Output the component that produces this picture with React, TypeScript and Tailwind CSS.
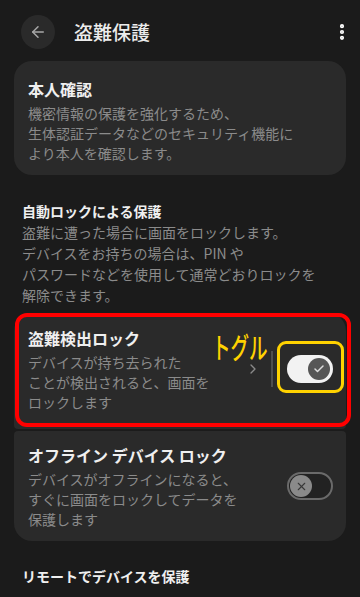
import React from 'react';
import { ArrowLeft, EllipsisVertical, ChevronRight, Check, X } from 'lucide-react';

const Title: React.FC<{ children: React.ReactNode }> = ({ children }) => (
  <div className="text-[16px] font-bold leading-[24px] text-[#efefef]">{children}</div>
);

const Desc: React.FC<{ children: React.ReactNode }> = ({ children }) => (
  <div className="mt-[2px] text-[14px] leading-[20px] text-[#8b8b8b]">{children}</div>
);

const ToggleOn = () => (
  <div className="flex h-[28px] w-[46px] shrink-0 items-center justify-end rounded-full bg-[#f2f2f2] pr-[3px]">
    <div className="flex h-[22px] w-[22px] items-center justify-center rounded-full bg-[#565656]">
      <Check size={12} strokeWidth={3} className="text-[#dcdcdc]" />
    </div>
  </div>
);

const ToggleOff = () => (
  <div className="flex h-[28px] w-[46px] shrink-0 items-center rounded-full border-2 border-[#6a6a6a] bg-[#222222] pl-[1px]">
    <div className="flex h-[22px] w-[22px] items-center justify-center rounded-full bg-[#8a8a8a]">
      <X size={13} strokeWidth={2} className="text-[#383838]" />
    </div>
  </div>
);

export default function App() {
  return (
    <div className="h-[597px] w-[360px] overflow-hidden bg-[#1b1b1b] font-['Noto_Sans_CJK_JP','Noto_Sans',sans-serif] text-white">
      {/* header */}
      <div className="flex h-[61px] items-start pt-[15px]">
        <div className="ml-[21px] flex h-[34px] w-[34px] items-center justify-center rounded-full bg-[#2a2a2a]">
          <ArrowLeft size={18} strokeWidth={2} className="text-[#a8a8a8]" />
        </div>
        <div className="ml-[19px] text-[19px] font-medium leading-[34px] text-[#ececec]">盗難保護</div>
        <div className="ml-auto mr-[8px] flex h-[34px] items-center">
          <EllipsisVertical size={20} strokeWidth={3} className="text-white" />
        </div>
      </div>

      {/* 本人確認 */}
      <div className="mx-[14px] rounded-[18px] bg-[#2a2a2a] px-[14px] pb-[12px] pt-[16px]">
        <Title>本人確認</Title>
        <Desc>
          機密情報の保護を強化するため、
          <br />
          生体認証データなどのセキュリティ機能に
          <br />
          より本人を確認します。
        </Desc>
      </div>

      {/* 自動ロック */}
      <div className="mt-[25px] px-[22px]">
        <div className="text-[14px] font-bold leading-[22px] text-[#efefef]">自動ロックによる保護</div>
        <div className="text-[14px] leading-[21px] text-[#8b8b8b]">
          盗難に遭った場合に画面をロックします。
          <br />
          デバイスをお持ちの場合は、PIN や
          <br />
          パスワードなどを使用して通常どおりロックを
          <br />
          解除できます。
        </div>
      </div>

      <div className="mx-[14px] mt-[7px]">
        <div className="relative">
          <div className="flex items-center rounded-b-[4px] rounded-t-[18px] bg-[#2a2a2a] pb-[17px] pl-[14px] pr-[13px] pt-[13px]">
            <div className="flex-1">
              <Title>盗難検出ロック</Title>
              <Desc>
                デバイスが持ち去られた
                <br />
                ことが検出されると、画面を
                <br />
                ロックします
              </Desc>
            </div>
            <ChevronRight size={16} strokeWidth={2} className="text-[#8a8a8a]" />
            <div className="ml-[10px] mr-[14px] h-[36px] w-[2px] bg-[#4e4e4e]" />
            <ToggleOn />
          </div>

          {/* annotations */}
          <div className="pointer-events-none absolute bottom-[2px] left-[1px] right-[-5px] top-0 rounded-[12px] border-[4px] border-[#ff0000]" />
          <div className="pointer-events-none absolute left-[263px] top-[28px] h-[52px] w-[67px] rounded-[9px] border-[3px] border-[#ffd200]" />
          <div className="pointer-events-none absolute left-[198px] top-[16px] origin-left scale-x-[0.64] whitespace-nowrap text-[29px] font-medium leading-[34px] text-[#ffd200]">
            トグル
          </div>
        </div>

        <div className="mt-[2px] flex items-center rounded-b-[18px] rounded-t-[4px] bg-[#2a2a2a] pb-[12px] pl-[14px] pr-[13px] pt-[12px]">
          <div className="flex-1">
            <Title>オフライン デバイス ロック</Title>
            <Desc>
              デバイスがオフラインになると、
              <br />
              すぐに画面をロックしてデータを
              <br />
              保護します
            </Desc>
          </div>
          <ToggleOff />
        </div>
      </div>

      <div className="mt-[24px] px-[22px] text-[14px] font-bold leading-[22px] text-[#efefef]">
        リモートでデバイスを保護
      </div>
    </div>
  );
}
